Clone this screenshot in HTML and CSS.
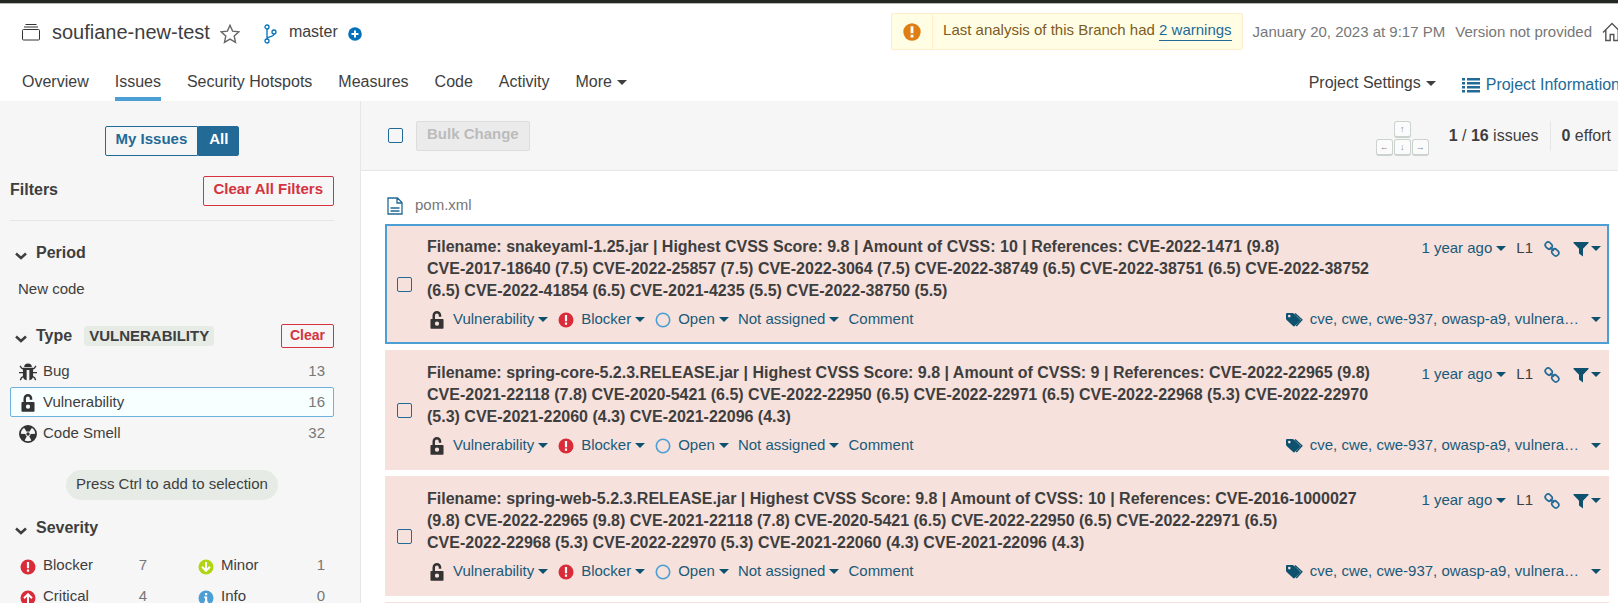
FILE: index.html
```html
<!DOCTYPE html>
<html lang="en">
<head>
<meta charset="utf-8">
<title>soufiane-new-test - Issues</title>
<link rel="stylesheet" href="styles.css">
</head>
<body>
<svg class="sprite" aria-hidden="true">
  <symbol id="i-lock" viewBox="0 0 16 16"><path fill-rule="evenodd" d="M4 7V3.900a3.900 3.900 0 0 1 7.800 0v1.100H9.600V3.900a1.700 1.700 0 0 0-3.400 0V7h6.900c.4 0 .7.3.7.7v7.400c0 .4-.3.7-.7.7H2.900a.7.7 0 0 1-.7-.7V7.700c0-.4.3-.7.7-.7zM8 9.400a1.900 1.900 0 1 0 0 3.800 1.900 1.900 0 0 0 0-3.800z"/></symbol>
  <symbol id="i-bug" viewBox="0 0 16 16"><path d="M4.600 3.600a3.400 3.200 0 0 1 6.800 0z"/><path fill-rule="evenodd" d="M3.500 4.300h9v7.200A4 4 0 0 1 9.200 15.300V6.200H6.800v9.100a4 4 0 0 1-3.300-3.800z"/><path d="M1 2.500l1.200 2 1.900 1M15 2.500l-1.200 2-1.900 1M0 8.600h4M12 8.600h4M1.200 15.200l1-2.200 2-1.200M14.800 15.200l-1-2.200-2-1.200" fill="none" stroke="currentColor" stroke-width="1.200"/></symbol>
  <symbol id="i-smell" viewBox="0 0 16 16"><circle cx="8" cy="8" r="7.200" fill="none" stroke="currentColor" stroke-width="1.500"/><circle cx="8" cy="8" r="1.500"/><g id="blade"><path d="M6.800 6.100L4.200 1.900a7 7 0 0 1 7.600 0L9.200 6.100a2.200 2.200 0 0 0-2.400 0z"/></g><path d="M6.800 6.100L4.200 1.900a7 7 0 0 1 7.600 0L9.200 6.100a2.200 2.200 0 0 0-2.400 0z" transform="rotate(120 8 8)"/><path d="M6.800 6.100L4.200 1.900a7 7 0 0 1 7.600 0L9.200 6.100a2.200 2.200 0 0 0-2.400 0z" transform="rotate(240 8 8)"/></symbol>
  <symbol id="i-alert" viewBox="0 0 16 16"><circle cx="8" cy="8" r="7.500"/><path d="M6.900 3h2.200v6.200H6.900zM6.900 10.600h2.200v2.200H6.900z" fill="#fff"/></symbol>
  <symbol id="i-up" viewBox="0 0 16 16"><circle cx="8" cy="8" r="7.500"/><path d="M8 13V4.500M4 8.200l4-4 4 4" fill="none" stroke="#fff" stroke-width="2"/></symbol>
  <symbol id="i-down" viewBox="0 0 16 16"><circle cx="8" cy="8" r="7.500"/><path d="M8 3v8.500M4 7.800l4 4 4-4" fill="none" stroke="#fff" stroke-width="2"/></symbol>
  <symbol id="i-info" viewBox="0 0 16 16"><circle cx="8" cy="8" r="7.500"/><path d="M7 3h2.200v2.200H7zM6.200 6.600h3v5h1v1.400H6.200v-1.400h.8V8h-.8z" fill="#fff"/></symbol>
  <symbol id="i-open" viewBox="0 0 16 16"><circle cx="8" cy="8" r="6.700" fill="none" stroke="currentColor" stroke-width="1.600"/></symbol>
  <symbol id="i-link" viewBox="0 0 16 16"><g fill="none" stroke="currentColor" stroke-width="1.700"><rect x="1" y="1.700" width="7.400" height="5.800" rx="2.900" transform="rotate(45 4.700 4.600)"/><rect x="7.600" y="8.500" width="7.400" height="5.800" rx="2.900" transform="rotate(45 11.300 11.400)"/><path d="M6.200 6.200l3.600 3.600"/></g></symbol>
  <symbol id="i-filter" viewBox="0 0 16 16"><path d="M.5 1h15v1L10 7.800V15.500L6 12.500V7.800L.5 2z"/></symbol>
  <symbol id="i-tags" viewBox="0 0 18 16"><path fill-rule="evenodd" d="M0 2.200C0 1.500.5 1 1.200 1h5.200c.6 0 1.200.3 1.700.7l5.700 5.600c.5.5.5 1.200 0 1.700l-5 5c-.5.500-1.200.500-1.700 0L.9 8.200C.4 7.700 0 7 0 6.400zM3.300 2.800a1.300 1.300 0 1 0 0 2.600 1.300 1.300 0 0 0 0-2.600z"/><path d="M9 1.500l6.800 6.300-5.600 6.300" fill="none" stroke="currentColor" stroke-width="1.500"/></symbol>
  <symbol id="i-chevron" viewBox="0 0 12 8"><path d="M1 1.500l5 4.500 5-4.500" fill="none" stroke="currentColor" stroke-width="2.500"/></symbol>
</svg>

<header class="header">
  <div class="header-top">
    <div class="project">
      <svg class="icon-18" viewBox="0 0 18 18" fill="none" stroke="#333" aria-hidden="true"><rect x="0.500" y="6.500" width="17" height="10.500" rx="1"/><path d="M2 4h14M3.500 1.500h11"/></svg>
      <h1 class="project-name">soufiane-new-test</h1>
      <button class="bare" aria-label="Favorite"><svg class="icon-20" viewBox="0 0 20 20" fill="none" stroke="#666" stroke-width="1.400"><path d="M10 1.300l2.600 5.800 6.300.7-4.700 4.200 1.300 6.300-5.500-3.200-5.500 3.200 1.300-6.300L1.100 7.800l6.300-.7z"/></svg></button>
      <svg class="icon-branch" viewBox="0 0 14 20" fill="none" stroke="#0271b9" stroke-width="1.300" aria-hidden="true"><circle cx="4" cy="3" r="2"/><circle cx="4" cy="17" r="2"/><circle cx="11" cy="8" r="2"/><path d="M4 5v10M11 10c0 3-6 2.500-7 4"/></svg>
      <span class="branch">master</span>
      <button class="bare" aria-label="Add branch"><svg class="icon-14" viewBox="0 0 14 14"><circle cx="7" cy="7" r="6.800" fill="#0271b9"/><path d="M7 3.500v7M3.500 7h7" stroke="#fff" stroke-width="2"/></svg></button>
    </div>
    <div class="header-meta">
      <div class="warning-box">
        <span class="warning-icon"><svg class="icon-18" viewBox="0 0 18 18"><circle cx="9" cy="9" r="8.700" fill="#e07e16"/><path d="M7.600 3.300h2.800v7H7.600zM7.600 11.800h2.800v2.600H7.600z" fill="#fff"/></svg></span>
        <span class="warning-text">Last analysis of this Branch had <a href="#">2 warnings</a></span>
      </div>
      <span>January 20, 2023 at 9:17 PM</span>
      <span>Version not provided</span>
      <a href="#" class="home" aria-label="Homepage"><svg class="icon-20" viewBox="0 0 20 20" fill="none" stroke="#555" stroke-width="1.400"><path d="M1 10.500L10 1.500l9 9M3.800 8v10.500h4.400v-6h3.600v6h4.400V8"/></svg></a>
    </div>
  </div>
  <div class="header-bottom">
    <nav class="tabs">
      <a href="#">Overview</a><a href="#" class="active">Issues</a><a href="#">Security Hotspots</a><a href="#">Measures</a><a href="#">Code</a><a href="#">Activity</a><a href="#">More<i class="caret"></i></a>
    </nav>
    <nav class="tabs tabs-right">
      <a href="#">Project Settings<i class="caret"></i></a>
      <a href="#" class="info-link"><svg class="icon-18" viewBox="0 0 18 18" fill="currentColor" aria-hidden="true"><path d="M0 2h3v2.500H0zM5 2h13v2.500H5zM0 6h3v2.500H0zM5 6h13v2.500H5zM0 10h3v2.500H0zM5 10h13v2.500H5zM0 14h3v2.500H0zM5 14h13v2.500H5z"/></svg>Project Information</a>
    </nav>
  </div>
</header>

<div class="workspace">
  <aside class="sidebar">
    <div class="toggle"><button>My Issues</button><button class="on">All</button></div>
    <div class="filters-head"><h2>Filters</h2><button class="btn-red">Clear All Filters</button></div>

    <section class="facet">
      <h3><svg class="chevron"><use href="#i-chevron"/></svg>Period</h3>
      <button class="period-option">New code</button>
    </section>

    <section class="facet">
      <h3><svg class="chevron"><use href="#i-chevron"/></svg>Type<span class="badge">VULNERABILITY</span><button class="btn-red small">Clear</button></h3>
      <div class="rows">
        <button class="row"><svg class="icon-18"><use href="#i-bug"/></svg><span>Bug</span><span class="count">13</span></button>
        <button class="row selected"><svg class="icon-18"><use href="#i-lock"/></svg><span>Vulnerability</span><span class="count">16</span></button>
        <button class="row"><svg class="icon-18"><use href="#i-smell"/></svg><span>Code Smell</span><span class="count">32</span></button>
      </div>
      <p class="hint">Press Ctrl to add to selection</p>
    </section>

    <section class="facet">
      <h3><svg class="chevron"><use href="#i-chevron"/></svg>Severity</h3>
      <div class="rows two">
        <button class="row"><svg class="icon-16 red"><use href="#i-alert"/></svg><span>Blocker</span><span class="count">7</span></button>
        <button class="row"><svg class="icon-16 green"><use href="#i-down"/></svg><span>Minor</span><span class="count">1</span></button>
        <button class="row"><svg class="icon-16 red"><use href="#i-up"/></svg><span>Critical</span><span class="count">4</span></button>
        <button class="row"><svg class="icon-16 sky"><use href="#i-info"/></svg><span>Info</span><span class="count">0</span></button>
      </div>
    </section>
  </aside>

  <main class="main">
    <div class="toolbar">
      <input type="checkbox" class="check" aria-label="Select all issues">
      <button class="bulk" disabled>Bulk Change</button>
      <div class="keys" aria-hidden="true"><kbd class="up">↑</kbd><kbd>←</kbd><kbd>↓</kbd><kbd>→</kbd></div>
      <span class="total"><b>1</b> / <b>16</b> issues</span>
      <span class="effort"><b>0</b> effort</span>
    </div>
    <div class="list">
      <div class="file"><svg class="icon-file" viewBox="0 0 16 18" fill="none" stroke="#236a97" stroke-width="1.300" aria-hidden="true"><path d="M1 1h9.500L15 5.500V17H1zM10 1v5h5M3.500 11h9M3.500 14h9"/></svg>pom.xml</div>
      <ul class="issues">
        <li class="issue current">
          <input type="checkbox" class="check" aria-label="Select issue">
          <div class="body">
            <div class="line">
              <p class="title">Filename: snakeyaml-1.25.jar | Highest CVSS Score: 9.8 | Amount of CVSS: 10 | References: <span>CVE-2022-1471</span> (9.8) <span>CVE-2017-18640</span> (7.5) <span>CVE-2022-25857</span> (7.5) <span>CVE-2022-3064</span> (7.5) <span>CVE-2022-38749</span> (6.5) <span>CVE-2022-38751</span> (6.5) <span>CVE-2022-38752</span> (6.5) <span>CVE-2022-41854</span> (6.5) <span>CVE-2021-4235</span> (5.5) <span>CVE-2022-38750</span> (5.5)</p>
              <div class="side"><button class="act">1 year ago<i class="caret"></i></button><span class="loc">L1</span><a href="#" class="perma" aria-label="Permalink"><svg class="icon-16"><use href="#i-link"/></svg></a><button class="act tight" aria-label="Filter similar"><svg class="icon-16"><use href="#i-filter"/></svg><i class="caret"></i></button></div>
            </div>
            <div class="meta">
              <svg class="icon-18 dark"><use href="#i-lock"/></svg><button class="act">Vulnerability<i class="caret"></i></button>
              <svg class="icon-16 red"><use href="#i-alert"/></svg><button class="act">Blocker<i class="caret"></i></button>
              <svg class="icon-16 sky"><use href="#i-open"/></svg><button class="act">Open<i class="caret"></i></button>
              <button class="act">Not assigned<i class="caret"></i></button><button class="act">Comment</button>
              <button class="act tags"><svg class="icon-18"><use href="#i-tags"/></svg><span>cve, cwe, cwe-937, owasp-a9, vulnera…</span><i class="caret"></i></button>
            </div>
          </div>
        </li>
        <li class="issue">
          <input type="checkbox" class="check" aria-label="Select issue">
          <div class="body">
            <div class="line">
              <p class="title">Filename: spring-core-5.2.3.RELEASE.jar | Highest CVSS Score: 9.8 | Amount of CVSS: 9 | References: <span>CVE-2022-22965</span> (9.8) <span>CVE-2021-22118</span> (7.8) <span>CVE-2020-5421</span> (6.5) <span>CVE-2022-22950</span> (6.5) <span>CVE-2022-22971</span> (6.5) <span>CVE-2022-22968</span> (5.3) <span>CVE-2022-22970</span> (5.3) <span>CVE-2021-22060</span> (4.3) <span>CVE-2021-22096</span> (4.3)</p>
              <div class="side"><button class="act">1 year ago<i class="caret"></i></button><span class="loc">L1</span><a href="#" class="perma" aria-label="Permalink"><svg class="icon-16"><use href="#i-link"/></svg></a><button class="act tight" aria-label="Filter similar"><svg class="icon-16"><use href="#i-filter"/></svg><i class="caret"></i></button></div>
            </div>
            <div class="meta">
              <svg class="icon-18 dark"><use href="#i-lock"/></svg><button class="act">Vulnerability<i class="caret"></i></button>
              <svg class="icon-16 red"><use href="#i-alert"/></svg><button class="act">Blocker<i class="caret"></i></button>
              <svg class="icon-16 sky"><use href="#i-open"/></svg><button class="act">Open<i class="caret"></i></button>
              <button class="act">Not assigned<i class="caret"></i></button><button class="act">Comment</button>
              <button class="act tags"><svg class="icon-18"><use href="#i-tags"/></svg><span>cve, cwe, cwe-937, owasp-a9, vulnera…</span><i class="caret"></i></button>
            </div>
          </div>
        </li>
        <li class="issue">
          <input type="checkbox" class="check" aria-label="Select issue">
          <div class="body">
            <div class="line">
              <p class="title">Filename: spring-web-5.2.3.RELEASE.jar | Highest CVSS Score: 9.8 | Amount of CVSS: 10 | References: <span>CVE-2016-1000027</span> (9.8) <span>CVE-2022-22965</span> (9.8) <span>CVE-2021-22118</span> (7.8) <span>CVE-2020-5421</span> (6.5) <span>CVE-2022-22950</span> (6.5) <span>CVE-2022-22971</span> (6.5) <span>CVE-2022-22968</span> (5.3) <span>CVE-2022-22970</span> (5.3) <span>CVE-2021-22060</span> (4.3) <span>CVE-2021-22096</span> (4.3)</p>
              <div class="side"><button class="act">1 year ago<i class="caret"></i></button><span class="loc">L1</span><a href="#" class="perma" aria-label="Permalink"><svg class="icon-16"><use href="#i-link"/></svg></a><button class="act tight" aria-label="Filter similar"><svg class="icon-16"><use href="#i-filter"/></svg><i class="caret"></i></button></div>
            </div>
            <div class="meta">
              <svg class="icon-18 dark"><use href="#i-lock"/></svg><button class="act">Vulnerability<i class="caret"></i></button>
              <svg class="icon-16 red"><use href="#i-alert"/></svg><button class="act">Blocker<i class="caret"></i></button>
              <svg class="icon-16 sky"><use href="#i-open"/></svg><button class="act">Open<i class="caret"></i></button>
              <button class="act">Not assigned<i class="caret"></i></button><button class="act">Comment</button>
              <button class="act tags"><svg class="icon-18"><use href="#i-tags"/></svg><span>cve, cwe, cwe-937, owasp-a9, vulnera…</span><i class="caret"></i></button>
            </div>
          </div>
        </li>
        <li class="issue"></li>
      </ul>
    </div>
  </main>
</div>
</body>
</html>
```

FILE: styles.css
```css
* { box-sizing: border-box; }

body {
  margin: 0;
  height: 100vh;
  overflow: hidden;
  display: flex;
  flex-direction: column;
  background: #fff;
  color: #3e3e3e;
  font: 15px/20px "Liberation Sans", Arial, sans-serif;
}

h1, h2, h3, p, ul { margin: 0; padding: 0; }
ul { list-style: none; }
a { color: inherit; text-decoration: none; }
svg { flex: none; display: block; fill: currentColor; }
button {
  margin: 0;
  padding: 0;
  border: 0;
  background: none;
  color: inherit;
  font: inherit;
  text-align: left;
}

.sprite { position: absolute; width: 0; height: 0; }
.icon-14 { width: 14px; height: 14px; }
.icon-16 { width: 16px; height: 16px; }
.icon-18 { width: 18px; height: 18px; }
.icon-20 { width: 20px; height: 20px; }
.icon-branch { width: 14px; height: 20px; }
.icon-file { width: 16px; height: 18px; }
.red { color: #d92b38; }
.green { color: #b0d513; }
.sky { color: #4b9fd5; }
.dark { color: #333; }

.header svg[fill="none"], .file svg { fill: none; }

.caret {
  display: inline-block;
  flex: none;
  margin-left: 5px;
  vertical-align: middle;
  border: 5px solid transparent;
  border-top-color: currentColor;
  border-bottom: 0;
}

/* Header */
.header {
  flex: none;
  margin-right: -4px;
  border-top: 3px solid #232823;
  box-shadow: inset 0 1px #b5b8b5;
}
.header-top {
  display: flex;
  justify-content: space-between;
  align-items: flex-start;
  height: 66px;
  padding: 10px 0 0 22px;
}
.project { display: flex; align-items: center; height: 38px; }
.project-name { margin: 0 10px 0 12px; font-size: 20px; line-height: 24px; font-weight: 400; }
.icon-branch { margin: 3px 12px 0 23px; }
.project .branch { margin-right: 10px; font-size: 16px; }
.project .bare { padding-top: 3px; }
.header-meta { display: flex; align-items: center; gap: 10px; color: #777; }
.warning-box {
  display: flex;
  height: 37px;
  border: 1px solid #ffeccb;
  border-radius: 2px;
  background: #fffee5;
  color: #7d5b22;
}
.warning-icon { display: flex; align-items: center; padding: 0 11px; border-right: 1px solid #ffeccb; }
.warning-text { padding: 6px 10px 0; }
.warning-text a { display: inline-block; color: #236a97; border-bottom: 1px solid; line-height: 20px; }

.header-bottom { display: flex; justify-content: space-between; padding: 0 2px 0 22px; }
.tabs { display: flex; gap: 26px; }
.tabs a { height: 32px; padding-top: 3px; font-size: 16px; }
.tabs .active { border-bottom: 4px solid #4b9fd5; }
.tabs-right a { padding-top: 4px; }
.tabs-right .info-link { display: flex; gap: 6px; height: 28px; align-items: center; color: #236a97; }

/* Page columns */
.workspace { flex: 1; display: flex; min-height: 0; }
.sidebar {
  flex: none;
  width: 361px;
  padding: 25px 26px 0 10px;
  overflow: hidden;
  background: #f6f6f6;
  border-right: 1px solid #e6e6e6;
}
.main { flex: 1; display: flex; flex-direction: column; min-width: 0; }

/* Sidebar */
.toggle { display: flex; justify-content: center; margin-bottom: 20px; }
.toggle button {
  height: 30px;
  padding: 0 10px 4px;
  border: 1px solid #236a97;
  color: #236a97;
  font-weight: 700;
}
.toggle .on { background: #236a97; color: #fff; }
.toggle button:first-child { border-radius: 2px 0 0 2px; }
.toggle button:last-child { border-radius: 0 2px 2px 0; }
.btn-red {
  height: 30px;
  padding: 0 10px 4px;
  border: 1px solid #d4333f;
  border-radius: 2px;
  color: #d4333f;
  font-weight: 700;
}
.btn-red.small { height: 24px; margin-left: auto; padding: 0 8px 2px; font-size: 14px; line-height: 20px; }
.filters-head {
  display: flex;
  justify-content: space-between;
  padding-bottom: 14px;
  border-bottom: 1px solid #e6e6e6;
}
.filters-head h2 { padding-top: 4px; font-size: 16px; line-height: 20px; }
.facet { padding-top: 19px; }
.facet h3 { display: flex; align-items: center; height: 26px; font-size: 16px; line-height: 20px; }
.chevron { width: 12px; height: 8px; margin: 5px 9px 0 5px; }
.period-option { display: block; margin: 13px 0 5px 8px; height: 20px; }
.badge {
  margin-left: 12px;
  padding: 0 5px;
  background: #e6ebe6;
  border-radius: 3px;
  font-size: 15px;
}
.rows { margin-top: 7px; display: grid; row-gap: 1px; }
.row {
  display: flex;
  align-items: center;
  gap: 6px;
  height: 30px;
  padding: 0 8px;
  border: 1px solid transparent;
  border-radius: 2px;
}
.row .count { margin-left: auto; color: #777; }
.row .icon-18 { margin-top: 2px; color: #333; }
.row .icon-16 { margin: 3px 1px 0; }
.row.selected { background: #f7ffff; border-color: #6db3de; }
.rows.two { grid-template-columns: 1fr 1fr; column-gap: 32px; margin-top: 9px; }
.hint {
  width: fit-content;
  height: 30px;
  margin: 22px auto 0;
  padding: 4px 10px;
  border-radius: 15px;
  background: #e6ebe6;
}
.facet:nth-of-type(3) { padding-top: 15px; }

/* Issue list */
.check {
  appearance: none;
  flex: none;
  width: 15px;
  height: 15px;
  margin: 0;
  border: 1px solid #236a97;
  border-radius: 2px;
}
.toolbar {
  flex: none;
  display: flex;
  align-items: center;
  height: 70px;
  padding: 0 7px 0 27px;
  background: #f6f6f6;
  border-bottom: 1px solid #e6e6e6;
  font-size: 16px;
}
.bulk {
  height: 30px;
  margin-left: 13px;
  padding: 0 10px 4px;
  border: 1px solid #ddd;
  border-radius: 2px;
  background: #ebebeb;
  color: #bbb;
  font-size: 15px;
  font-weight: 700;
}
.keys {
  display: grid;
  grid-template-columns: repeat(3, 17px);
  gap: 1px;
  padding-top: 6px;
  margin: 0 20px 0 auto;
}
.keys kbd {
  height: 17px;
  border: 1px solid #ccd3cf;
  border-bottom-width: 2px;
  border-radius: 3px;
  background: #fbfbfb;
  color: #888;
  font: 9px/14px "Liberation Sans", sans-serif;
  text-align: center;
}
.keys .up { grid-column: 2; }
.keys .up + kbd { grid-column: 1; }
.effort { margin-left: 12px; padding: 5px 0 5px 10px; border-left: 1px solid #e6e6e6; }

.list { flex: 1; min-height: 0; overflow: hidden; padding: 24px 9px 0 24px; }
.file { display: flex; gap: 12px; height: 29px; padding-left: 2px; color: #777; }
.file svg { margin-top: 2px; }
.issues { display: grid; gap: 6px; }
.issue {
  display: flex;
  align-items: center;
  min-height: 120px;
  padding: 0 6px 0 10px;
  border: 2px solid #f6e1dd;
  background: #f6e1dd;
}
.issue.current { border-color: #4b9fd5; }
.body { flex: 1; min-width: 0; margin-left: 15px; padding-bottom: 4px; }
.line { display: flex; justify-content: space-between; gap: 36px; }
.title { flex: 1; font-size: 16px; line-height: 22px; font-weight: 700; }
.title span { white-space: nowrap; }
.side { display: flex; align-items: center; height: 24px; white-space: nowrap; }
.act { display: flex; align-items: center; color: #1a5a78; }
.act .caret { color: #0e516f; margin: 2px 0 0 4px; }
.loc { margin: 0 11px 0 10px; }
.perma { margin-right: 13px; color: #236a97; }
.act.tight .caret { margin-left: 2px; }
.act.tight svg { color: #0e516f; margin-top: 3px; }
.perma svg { margin-top: 3px; }
.meta { display: flex; align-items: center; margin-top: 7px; height: 20px; }
.meta .act { margin-right: 9px; }
.meta svg { margin: 3px 7px 0 1px; }
.meta .act.tags { margin: 0 0 0 auto; }
.tags svg { margin: 3px 6px 0 0; color: #0e516f; }
.meta .tags .caret { margin-left: 12px; }
```
